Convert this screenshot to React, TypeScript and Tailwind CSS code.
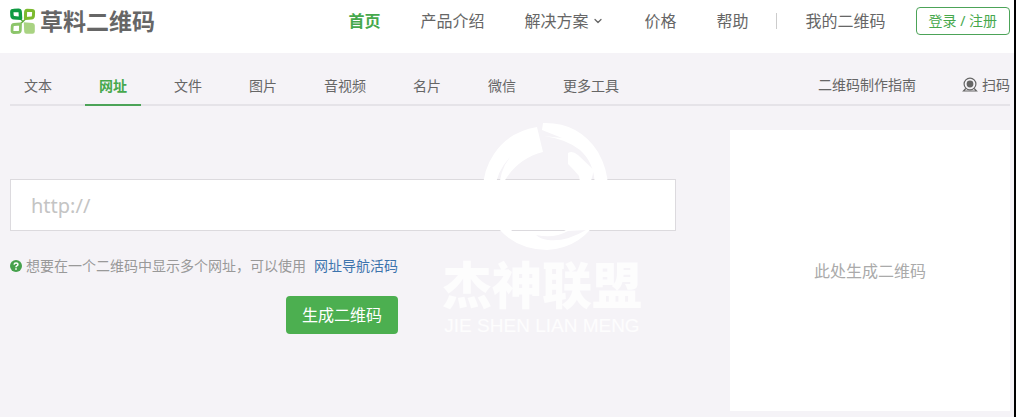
import React from 'react';
import { ChevronDown } from 'lucide-react';

const navItems = [
  { label: '首页', active: true },
  { label: '产品介绍' },
  { label: '解决方案', dropdown: true },
  { label: '价格' },
  { label: '帮助' },
];

const tabs = ['文本', '网址', '文件', '图片', '音视频', '名片', '微信', '更多工具'];
const activeTab = '网址';

const LogoMark = () => (
  <svg className="w-[26px] h-[27px]" viewBox="0 0 26 27" fill="none" aria-hidden="true">
    <path d="M9 9.5 L13 13.5 L17 9.5 M9 17 L13 13.5" stroke="#5fae3c" strokeWidth="1.4" />
    <path d="M3.5 2.5 L8.5 2.2 Q10 2.2 10.2 4 L10.6 10.4 L4 9.8 Q2.2 9.6 2 8 L1.8 4 Q1.8 2.5 3.5 2.5 Z" stroke="#0f9a43" strokeWidth="3.4" strokeLinejoin="round" />
    <path d="M17 2.2 L22 2.4 Q23.6 2.5 23.6 4 L23.4 8 Q23.2 9.8 21.5 9.9 L15.4 10.4 L15.6 4 Q15.8 2.2 17 2.2 Z" stroke="#7cba2f" strokeWidth="3" strokeLinejoin="round" />
    <path d="M4 16.5 L10.5 16 L10.3 22.5 Q10.2 24.3 8.6 24.4 L3.6 24.5 Q2 24.4 2 22.8 L2.2 18.3 Q2.4 16.6 4 16.5 Z" stroke="#8cc56a" strokeWidth="2.8" strokeLinejoin="round" />
    <path d="M13.8 14.2 L22.5 15 Q24.8 15.3 24.8 17.5 V23.5 Q24.8 25.8 22.5 25.8 H16.5 Q14.2 25.8 14.2 23.5 Z" fill="#a9d382" />
  </svg>
);

const WebcamIcon = () => (
  <svg className="w-4 h-4" viewBox="0 0 16 16" fill="none" stroke="#666" aria-hidden="true">
    <circle cx="8" cy="7" r="5.9" strokeWidth="1.2" />
    <circle cx="8" cy="7" r="3.4" fill="#666" stroke="none" />
    <path d="M3.8 11.5 L1.5 14 H14.5 L12.2 11.5" strokeWidth="1.2" />
  </svg>
);

const HelpIcon = () => (
  <svg className="w-3 h-3" viewBox="0 0 12 12" fill="none" aria-hidden="true">
    <circle cx="6" cy="6" r="6" fill="#46a14c" />
    <path d="M4.1 4.6 Q4.2 2.9 6 2.9 Q7.9 2.9 7.9 4.5 Q7.9 5.4 6.8 5.9 Q6 6.3 6 7.2" stroke="#fff" strokeWidth="1.5" />
    <path d="M6 8.2 V9.7" stroke="#fff" strokeWidth="1.6" />
  </svg>
);

const Watermark = () => (
  <div className="absolute left-[442px] top-[122px] w-[200px] flex flex-col items-center text-white/80 pointer-events-none whitespace-nowrap font-['Liberation_Sans','Noto_Sans_CJK_SC',sans-serif]">
    <svg className="w-32 h-32 ml-2" viewBox="0 0 128 128" fill="#fff" aria-hidden="true">
      <path d="M55 5 Q26 10 12 32 Q1 48 1 68 L13 68 Q14 50 29 34 Q17 48 17 70 Q30 38 61 30 Z" />
      <path d="M61 1 Q97 0 116 30 Q134 62 119 92 Q101 126 65 128 Q26 127 8 94 Q1 81 1 60 L17 60 Q16 92 30 109 L82 109 Q106 98 112 74 Q116 44 98 28 Q84 17 62 14 L80 16 L60 8 Z" />
      <path d="M86 31 Q90 28 96 33 L112 48 L106 70 Q98 66 97 54 Q92 48 86 42 Z" />
      <path d="M54 113 Q72 117 86 109 L104 108 Q84 120 66 118 Q58 117 54 113 Z" fill="#f5f3f7" />
    </svg>
    <div className="mt-3 text-[50px] leading-[50px] font-black">杰神联盟</div>
    <div className="mt-1 text-[19px] leading-5">JIE SHEN LIAN MENG</div>
  </div>
);

const App = () => {
  return (
    <div className="relative min-h-screen bg-[#f5f3f7] border-r-2 border-black text-[#666] font-['Noto_Sans','Noto_Sans_CJK_SC',sans-serif]">
      <header className="bg-white pl-2.5 pr-1 pb-[11px] flex items-center justify-between whitespace-nowrap">
        <a href="#" className="flex items-center gap-1">
          <LogoMark />
          <span className="text-[23px] leading-6 font-bold">草料二维码</span>
        </a>
        <nav className="flex items-center text-base leading-[42px]">
          <div className="flex items-center gap-10">
            {navItems.map((item) => (
              <a
                key={item.label}
                href="#"
                className={`flex items-center gap-1 ${item.active ? 'text-[#46a84c] font-bold' : ''}`}
              >
                {item.label}
                {item.dropdown && <ChevronDown className="w-3 h-3" strokeWidth={2.5} />}
              </a>
            ))}
          </div>
          <span className="w-px h-4 mx-7 bg-[#ccc]" />
          <a href="#">我的二维码</a>
          <button
            type="button"
            className="ml-[30px] h-7 px-3 border border-[#4ca358] rounded text-sm leading-none text-[#46a84c]"
          >
            登录 / 注册
          </button>
        </nav>
      </header>

      <main className="pl-2.5 pr-1">
        <div className="pt-3 flex justify-between border-b-2 border-[#e5e3e8] text-sm whitespace-nowrap">
          <div className="flex gap-[19px]">
            {tabs.map((tab) => (
              <a
                key={tab}
                href="#"
                className={`-mb-0.5 px-3.5 h-[41px] leading-[41px] border-b-2 ${
                  tab === activeTab ? 'border-[#4ca358] text-[#46a84c] font-bold' : 'border-transparent'
                }`}
              >
                {tab}
              </a>
            ))}
          </div>
          <div className="flex items-center gap-[46px] leading-[39px]">
            <a href="#">二维码制作指南</a>
            <a href="#" className="flex items-center gap-1">
              <WebcamIcon />
              扫码
            </a>
          </div>
        </div>

        <div className="pt-6 pb-1.5 flex gap-[54px]">
          <form className="flex-1 pt-[49px] flex flex-col items-start">
            <input
              type="text"
              aria-label="网址"
              placeholder="http://"
              className="w-full h-[52px] px-5 bg-white border border-[#dcdade] text-xl placeholder:text-[#c4c4c4] outline-none"
            />
            <div className="mt-[23px] flex flex-col items-end whitespace-nowrap">
              <p className="flex items-center text-sm leading-6 text-[#999]">
                <HelpIcon />
                <span className="ml-1">想要在一个二维码中显示多个网址，可以使用</span>
                <a href="#" className="ml-2 text-[#3d74ad]">网址导航活码</a>
              </p>
              <button type="button" className="mt-[18px] h-[38px] px-4 rounded bg-[#4caf50] text-base leading-none text-white">
                生成二维码
              </button>
            </div>
          </form>
          <aside className="w-[280px] h-[281px] flex items-center justify-center bg-white text-base text-[#aaa]">
            此处生成二维码
          </aside>
        </div>
      </main>

      <Watermark />
    </div>
  );
};

export default App;
